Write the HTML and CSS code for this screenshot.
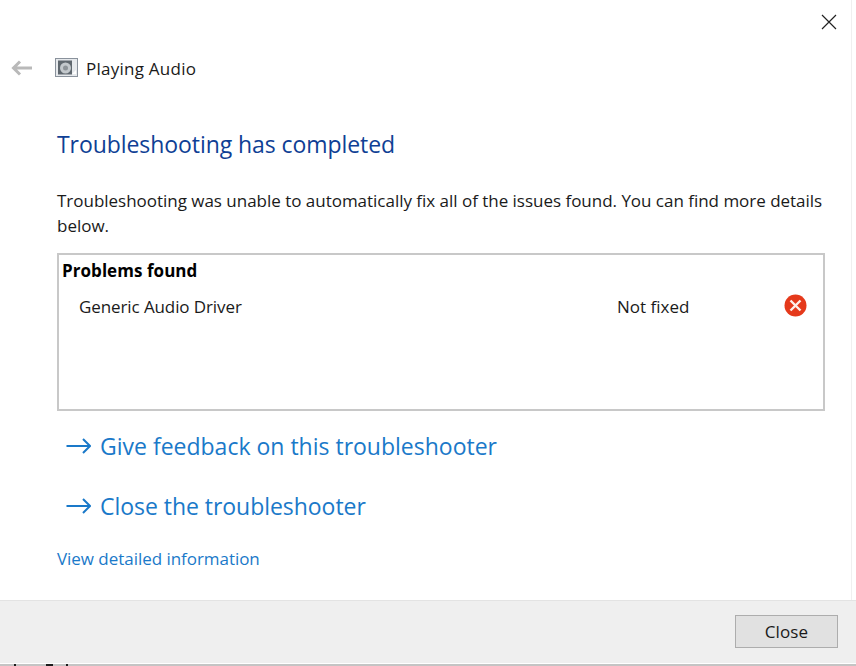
FILE: index.html
```html
<!DOCTYPE html>
<html lang="en">
<head>
<meta charset="utf-8">
<title>Playing Audio</title>
<link rel="stylesheet" href="styles.css">
</head>
<body>
<div class="window">
  <main class="main">
    <div class="close-row">
      <svg class="x-icon" width="16" height="16" viewBox="0 0 16 16"><path d="M1 1L15 15M15 1L1 15" stroke="#222" stroke-width="1.2" fill="none"/></svg>
    </div>
    <div class="nav-row">
      <svg class="back-icon" width="22" height="16" viewBox="0 0 22 16"><path d="M2 8H21M9 1.5L2.5 8L9 14.5" stroke="#b9b9b9" stroke-width="3" fill="none"/></svg>
      <svg class="app-icon" width="23" height="20" viewBox="0 0 23 20">
        <rect x="0.5" y="0.5" width="22" height="18" fill="#e6e9ec" stroke="#8a929c"/>
        <rect x="3" y="2.5" width="14" height="14" fill="#5f676e"/>
        <circle cx="10.5" cy="10" r="5.5" fill="#c3c8cc"/>
        <circle cx="10.5" cy="10" r="2.5" fill="#8d9398"/>
        <path d="M17 16l4-4v4z" fill="#fff"/>
      </svg>
      <span class="nav-title">Playing Audio</span>
    </div>
    <h1 class="heading">Troubleshooting has completed</h1>
    <p class="desc">Troubleshooting was unable to automatically fix all of the issues found. You can find more details below.</p>
    <section class="problems">
      <h2 class="problems-title">Problems found</h2>
      <div class="problem-row">
        <span class="problem-name">Generic Audio Driver</span>
        <span class="problem-status">Not fixed</span>
        <svg class="err-icon" width="23" height="23" viewBox="0 0 23 23"><circle cx="11.5" cy="11.5" r="11" fill="#e5391b"/><path d="M6.5 6.5L16.5 16.5M16.5 6.5L6.5 16.5" stroke="#fdeee9" stroke-width="2.4" fill="none"/></svg>
      </div>
    </section>
    <a class="cmd-link first" href="#">
      <svg class="cmd-arrow" width="25" height="18" viewBox="0 0 25 18"><path d="M0.5 9H24M17 2L24 9L17 16" stroke="#1a79c9" stroke-width="2" fill="none"/></svg>
      <span>Give feedback on this troubleshooter</span>
    </a>
    <a class="cmd-link second" href="#">
      <svg class="cmd-arrow" width="25" height="18" viewBox="0 0 25 18"><path d="M0.5 9H24M17 2L24 9L17 16" stroke="#1a79c9" stroke-width="2" fill="none"/></svg>
      <span>Close the troubleshooter</span>
    </a>
    <a class="detail-link" href="#">View detailed information</a>
  </main>
  <footer class="footer">
    <button class="close-btn" type="button">Close</button>
  </footer>
  <div class="strip">
    <span class="bit bit-a"></span>
    <span class="bit bit-b"></span>
    <span class="bit bit-c"></span>
  </div>
</div>
</body>
</html>
```
FILE: styles.css
```css
html, body {
  margin: 0;
  padding: 0;
  background: #fff;
}
body {
  width: 856px;
  height: 666px;
  overflow: hidden;
  font-family: "Open Sans", "Noto Sans", sans-serif;
  color: #1a1a1a;
}
.window {
  display: flex;
  flex-direction: column;
  height: 666px;
}
.main {
  height: 600px;
  padding: 14px 0 0 0;
  box-sizing: border-box;
  display: flex;
  flex-direction: column;
  border-right: 1px solid #f0f0f0;
  margin-right: 4px;
}
.close-row {
  display: flex;
  justify-content: flex-end;
  padding-right: 14px;
  height: 16px;
}
.nav-row {
  display: flex;
  align-items: center;
  margin-top: 24px;
  padding-left: 11px;
  height: 28px;
}
.app-icon { margin-left: 22px; }
.nav-title {
  margin-left: 8px;
  font-size: 17px;
  letter-spacing: 0.25px;
}
.heading {
  margin: 46px 0 0 57px;
  font-size: 23px;
  line-height: 32px;
  font-weight: 400;
  color: #0f3f95;
  letter-spacing: -0.07px;
}
.desc {
  margin: 28px 0 0 57px;
  width: 775px;
  font-size: 17px;
  line-height: 25px;
  letter-spacing: -0.02px;
  color: #1a1a1a;
}
.problems {
  margin: 15px 0 0 57px;
  width: 768px;
  height: 158px;
  box-sizing: border-box;
  border: 2px solid #c8c8c8;
  padding: 4px 16px 0 3px;
}
.problems-title {
  margin: 0;
  font-size: 17px;
  line-height: 24px;
  font-weight: 700;
  letter-spacing: 0.05px;
  color: #000;
}
.problem-row {
  display: flex;
  align-items: center;
  margin-top: 10px;
  height: 26px;
  padding-left: 17px;
  font-size: 17px;
}
.problem-name { width: 538px; letter-spacing: -0.1px; }
.problem-status { flex: 1; letter-spacing: 0; }
.err-icon { margin-top: -2px; }
.cmd-link {
  display: flex;
  align-items: center;
  margin-left: 66px;
  height: 36px;
  text-decoration: none;
  color: #1a79c9;
  font-size: 23px;
}
.cmd-link.first { margin-top: 17px; }
.cmd-link.second { margin-top: 24px; letter-spacing: -0.04px; }
.cmd-arrow { margin-right: 9px; }
.detail-link {
  margin: 23px 0 0 57px;
  font-size: 17px;
  line-height: 24px;
  color: #1a79c9;
  text-decoration: none;
  letter-spacing: -0.04px;
}
.footer {
  height: 63px;
  box-sizing: border-box;
  background: #efefef;
  border-top: 1px solid #e3e3e3;
  display: flex;
  justify-content: flex-end;
  align-items: flex-start;
  padding: 14px 18px 0 0;
}
.close-btn {
  width: 103px;
  height: 33px;
  background: #e1e1e1;
  border: 1px solid #adadad;
  font-family: inherit;
  font-size: 17px;
  letter-spacing: 0.1px;
  color: #1a1a1a;
  padding: 0;
}
.strip {
  height: 2px;
  margin-top: 1px;
  background: #c4c4c4;
  display: flex;
}
.bit {
  display: block;
  height: 2px;
  background: #1c1c1c;
}
.bit-a { width: 2px; margin-left: 14px; }
.bit-b { width: 7px; margin-left: 30px; }
.bit-c { width: 2px; margin-left: 13px; }
```
